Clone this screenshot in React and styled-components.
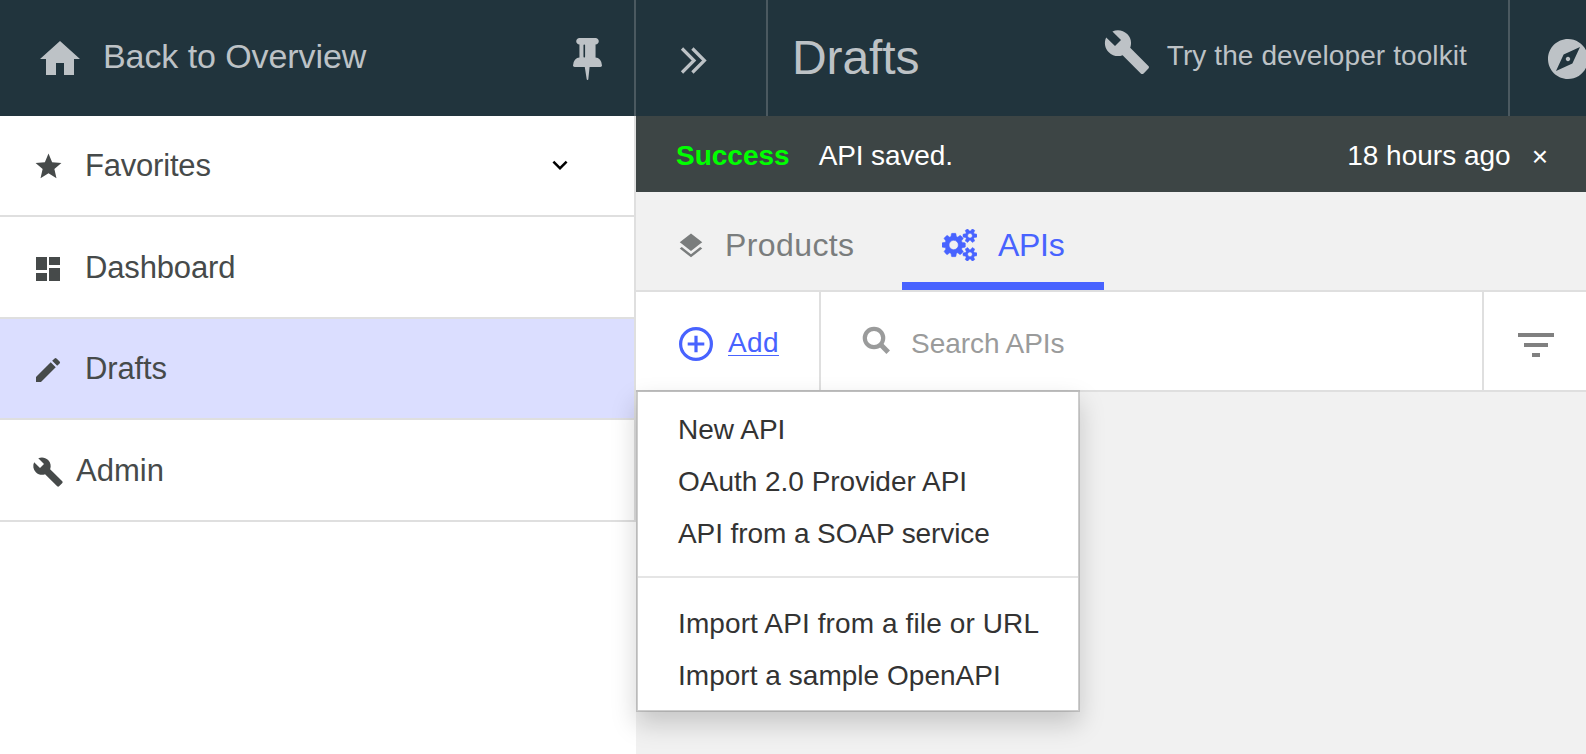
import React from "react";
import styled, { createGlobalStyle } from "styled-components";
import {
  MdStar,
  MdEdit,
  MdExpandMore,
  MdLayers,
  MdFilterList,
} from "react-icons/md";

const c = {
  header: "#21343d",
  headerText: "#bdc2c6",
  headerLine: "#4b5960",
  line: "#dfdfdf",
  page: "#f1f1f1",
  ink: "#464a4a",
  blue: "#4863ff",
  notice: "#3d4545",
};

const GlobalStyle = createGlobalStyle`
  * { box-sizing: border-box; }
  body {
    margin: 0;
    overflow: hidden;
    background: #fff;
    font-family: "Liberation Sans", Arial, sans-serif;
  }
  svg { display: block; flex: none; }
`;

const Page = styled.div`
  display: grid;
  grid-template-columns: 636px 950px;
  width: 1586px;
  height: 754px;
  overflow: hidden;
`;

const Text = styled.span`
  white-space: nowrap;
  font-size: ${(p) => p.$size}px;
  line-height: ${(p) => p.$size + 8}px;
  letter-spacing: ${(p) => p.$track || 0}px;
  padding-top: ${(p) => p.$down || 0}px;
  padding-bottom: ${(p) => p.$up || 0}px;
`;

const Sidebar = styled.aside`
  display: flex;
  flex-direction: column;
  background: #fff;
`;

const SideHeader = styled.div`
  display: flex;
  align-items: center;
  height: 116px;
  padding: 2px 32px 0 36px;
  background: ${c.header};
  color: ${c.headerText};
  border-right: 2px solid ${c.headerLine};
`;

const BackLink = styled.a`
  display: flex;
  align-items: center;
  gap: 19px;
  margin-right: auto;
  color: inherit;
`;

const NavList = styled.nav`
  border-right: 2px solid ${c.line};
`;

const NavItem = styled.a`
  display: flex;
  align-items: center;
  gap: ${(p) => p.$gap || 21}px;
  height: ${(p) => p.$height}px;
  padding: 0 59px 0 32px;
  color: ${c.ink};
  background: ${(p) => (p.$active ? "#dbdeff" : "#fff")};
  border-bottom: 2px solid ${c.line};
`;

const NavIcon = styled.span`
  display: flex;
  justify-content: center;
  width: 32px;
  padding-top: ${(p) => p.$down || 0}px;
`;

const Toggle = styled.span`
  display: flex;
  margin-left: auto;
  padding-bottom: 2px;
  color: #000;
`;

const Main = styled.main`
  display: flex;
  flex-direction: column;
  background: ${c.page};
`;

const TopBar = styled.header`
  display: flex;
  height: 116px;
  background: ${c.header};
  color: ${c.headerText};
  overflow: hidden;
`;

const TopCell = styled.div`
  display: flex;
  align-items: center;
  flex: none;
  width: ${(p) => p.$width}px;
  padding-left: ${(p) => p.$left}px;
  padding-top: ${(p) => p.$down || 0}px;
  border-right: ${(p) => (p.$last ? 0 : 2)}px solid ${c.headerLine};
`;

const Toolkit = styled.a`
  display: flex;
  align-items: center;
  gap: 16px;
  margin-left: auto;
  padding: 0 41px 4px 0;
`;

const ToolkitIcon = styled.span`
  display: flex;
  padding-bottom: 8px;
`;

const Notice = styled.div`
  display: flex;
  align-items: center;
  height: 76px;
  padding: 3px 38px 0 40px;
  background: ${c.notice};
  color: #fff;
`;

const Status = styled(Text)`
  color: #00ff00;
  font-weight: 700;
  margin-right: 29px;
`;

const Ago = styled(Text)`
  margin-left: auto;
  margin-right: 21px;
`;

const Tabs = styled.div`
  display: flex;
  height: 100px;
  border-bottom: 2px solid ${c.line};
`;

const Tab = styled.a`
  display: flex;
  align-items: center;
  width: ${(p) => p.$width}px;
  padding: ${(p) => (p.$active ? "8px 0 0 39.5px" : "0 0 0 40px")};
  gap: ${(p) => (p.$active ? 21.5 : 19)}px;
  color: ${(p) => (p.$active ? c.blue : "#7a7d7d")};
  border-bottom: ${(p) => (p.$active ? `8px solid ${c.blue}` : "0")};
`;

const TabIcon = styled.span`
  display: flex;
  padding-top: ${(p) => p.$down || 0}px;
`;

const Toolbar = styled.div`
  position: relative;
  display: flex;
  height: 100px;
  background: #fff;
  border-bottom: 2px solid ${c.line};
`;

const AddCell = styled.div`
  display: flex;
  align-items: center;
  gap: 15px;
  width: 185px;
  padding: 6px 0 0 43px;
  color: ${c.blue};
  border-right: 2px solid ${c.line};
`;

const AddText = styled.span`
  font-size: 28px;
  line-height: 31px;
  height: 29px;
  letter-spacing: 0.4px;
  margin-bottom: 5px;
  border-bottom: 1px solid ${c.blue};
`;

const SearchCell = styled.div`
  display: flex;
  align-items: center;
  flex: 1;
  gap: 19px;
  padding-left: 41px;
  color: #9a9b9b;
`;

const SearchIcon = styled.svg`
  margin-bottom: 2px;
  filter: blur(0.6px);
`;

const FilterCell = styled.div`
  display: flex;
  align-items: center;
  padding: 8px 0 0 28px;
  width: 104px;
  color: #808080;
  border-left: 2px solid ${c.line};
`;

const Menu = styled.ul`
  position: absolute;
  top: 98px;
  left: 0;
  z-index: 2;
  width: 444px;
  height: 322px;
  margin: 0;
  padding: 12px 0 0;
  list-style: none;
  background: #fff;
  background-clip: padding-box;
  border: 2px solid rgba(0, 0, 0, 0.15);
  box-shadow: 0 12px 24px rgba(0, 0, 0, 0.175);
`;

const MenuItem = styled.li`
  height: 52px;
  padding-left: 40px;
  font-size: 28px;
  line-height: 52px;
  letter-spacing: ${(p) => p.$track || 0}px;
  white-space: nowrap;
  color: #333;
`;

const Divider = styled.li`
  height: 2px;
  margin: 16px 0 20px;
  background: #e5e5e5;
`;

const HomeIcon = () => (
  <svg width="48" height="48" viewBox="0 0 24 24" fill="currentColor">
    <path d="M10 20v-6h4v6h5v-8h3L12 3 2 12h3v8z" />
  </svg>
);

const WrenchIcon = ({ size }) => (
  <svg width={size} height={size} viewBox="0 0 24 24" fill="currentColor">
    <path d="M22.7 19l-9.1-9.1c.9-2.3.4-5-1.5-6.9-2-2-5-2.4-7.4-1.3L9 6 6 9 1.6 4.7C.4 7.1.9 10.1 2.9 12.1c1.9 1.9 4.6 2.4 6.9 1.5l9.1 9.1c.4.4 1 .4 1.4 0l2.3-2.3c.5-.4.5-1.1.1-1.4z" />
  </svg>
);

const DashboardIcon = () => (
  <svg width="32" height="32" viewBox="0 0 32 32" fill="currentColor">
    <path d="M4 4h11v13H4zM17 4h11v8H17zM4 20h11v8H4zM17 15h11v13H17z" />
  </svg>
);

const PinIcon = () => (
  <svg width="29" height="42" viewBox="0 -1408 1152 1664" fill="currentColor">
    <path
      transform="scale(1 -1)"
      d="M480 672v448q0 14 -9 23t-23 9t-23 -9t-9 -23v-448q0 -14 9 -23t23 -9t23 9t9 23zM1152 320q0 -26 -19 -45t-45 -19h-429l-51 -483q-2 -12 -10.5 -20.5t-20.5 -8.5h-1q-27 0 -32 27l-76 485h-404q-26 0 -45 19t-19 45q0 123 78.5 221.5t177.5 98.5v512q-52 0 -90 38t-38 90t38 90t90 38h640q52 0 90 -38t38 -90t-38 -90t-90 -38v-512q99 0 177.5 -98.5t78.5 -221.5z"
    />
  </svg>
);

const DoubleChevron = () => (
  <svg width="28" height="30" viewBox="0 0 28 30" fill="none" stroke="currentColor" strokeWidth="3.2">
    <path d="M2 2.5 14 14.5 2 26.5M12.4 2.5l12 12-12 12" />
  </svg>
);

const CompassIcon = () => (
  <svg width="48" height="48" viewBox="0 0 24 24" fill="currentColor">
    <path d="M12 10.9c-.61 0-1.1.49-1.1 1.1s.49 1.1 1.1 1.1c.61 0 1.1-.49 1.1-1.1s-.49-1.1-1.1-1.1zM12 2C6.48 2 2 6.48 2 12s4.48 10 10 10 10-4.48 10-10S17.52 2 12 2zm2.19 12.19L6 18l3.81-8.19L18 6l-3.81 8.19z" />
  </svg>
);

const smallGear =
  "v-140q0 -16 -149 -31q-12 -27 -30 -52q51 -113 51 -138q0 -4 -4 -7q-122 -71 -124 -71q-8 0 -46 47t-52 68q-20 -2 -30 -2t-30 2q-14 -21 -52 -68t-46 -47q-2 0 -124 71q-4 3 -4 7q0 25 51 138q-18 25 -30 52q-149 15 -149 31v140q0 16 149 31q13 29 30 52q-51 113 -51 138q0 4 4 7q4 2 35 20t59 34t30 16q8 0 46 -46.5t52 -67.5q20 2 30 2t30 -2q51 71 92 112l6 2q4 0 124 -70q4 -3 4 -7q0 -25 -51 -138q17 -23 30 -52q149 -15 149 -31z";

const GearsIcon = () => (
  <svg
    width="35"
    height="32"
    viewBox="0 -1520 1920 1760"
    fill="currentColor"
    stroke="currentColor"
    strokeWidth="30"
  >
    <path
      transform="scale(1 -1)"
      d={`M896 640q0 106 -75 181t-181 75t-181 -75t-75 -181t75 -181t181 -75t181 75t75 181zM1664 128q0 52 -38 90t-90 38t-90 -38t-38 -90q0 -53 37.5 -90.5t90.5 -37.5t90.5 37.5t37.5 90.5zM1664 1152q0 52 -38 90t-90 38t-90 -38t-38 -90q0 -53 37.5 -90.5t90.5 -37.5t90.5 37.5t37.5 90.5zM1280 731v-185q0 -10 -7 -19.5t-16 -10.5l-155 -24q-11 -35 -32 -76q34 -48 90 -115q7 -11 7 -20q0 -12 -7 -19q-23 -30 -82.5 -89.5t-78.5 -59.5q-11 0 -21 7l-115 90q-37 -19 -77 -31q-11 -108 -23 -155q-7 -24 -30 -24h-186q-11 0 -20 7.5t-10 17.5l-23 153q-34 10 -75 31l-118 -89q-7 -7 -20 -7q-11 0 -21 8q-144 133 -144 160q0 9 7 19q10 14 41 53t47 61q-23 44 -35 82l-152 24q-10 1 -17 9.5t-7 19.5v185q0 10 7 19.5t16 10.5l155 24q11 35 32 76q-34 48 -90 115q-7 11 -7 20q0 12 7 20q22 30 82 89t79 59q11 0 21 -7l115 -90q34 18 77 32q11 108 23 154q7 24 30 24h186q11 0 20 -7.5t10 -17.5l23 -153q34 -10 75 -31l118 89q8 7 20 7q11 0 21 -8q144 -133 144 -160q0 -8 -7 -19q-12 -16 -42 -54t-45 -60q23 -48 34 -82l152 -23q10 -2 17 -10.5t7 -19.5zM1920 198${smallGear}M1920 1222${smallGear}`}
    />
  </svg>
);

const AddIcon = () => (
  <svg width="34" height="34" viewBox="0 0 34 34" fill="none" stroke="currentColor" strokeWidth="3.2">
    <circle cx="17" cy="17" r="15.4" />
    <path d="M17 8.7v16.6M8.7 17h16.6" />
  </svg>
);

export default function App() {
  return (
    <>
      <GlobalStyle />
      <Page>
        <Sidebar>
          <SideHeader>
            <BackLink>
              <HomeIcon />
              <Text $size={34} $up={7} $track={-0.08}>Back to Overview</Text>
            </BackLink>
            <PinIcon />
          </SideHeader>
          <NavList>
            <NavItem $height={101}>
              <NavIcon $down={2}><MdStar size={31} /></NavIcon>
              <Text $size={31} $track={-0.2}>Favorites</Text>
              <Toggle><MdExpandMore size={30} /></Toggle>
            </NavItem>
            <NavItem $height={102}>
              <NavIcon $down={4}><DashboardIcon /></NavIcon>
              <Text $size={31} $track={-0.15}>Dashboard</Text>
            </NavItem>
            <NavItem $height={101} $active>
              <NavIcon $down={3}><MdEdit size={32} /></NavIcon>
              <Text $size={31} $track={-0.15}>Drafts</Text>
            </NavItem>
            <NavItem $height={102} $gap={12}>
              <NavIcon $down={4}><WrenchIcon size={32} /></NavIcon>
              <Text $size={31}>Admin</Text>
            </NavItem>
          </NavList>
        </Sidebar>
        <Main>
          <TopBar>
            <TopCell $width={132} $left={44} $down={5}>
              <DoubleChevron />
            </TopCell>
            <TopCell $width={742} $left={24}>
              <Text $size={48} $track={-0.1}>Drafts</Text>
              <Toolkit>
                <ToolkitIcon><WrenchIcon size={48} /></ToolkitIcon>
                <Text $size={28} $track={0.1}>Try the developer toolkit</Text>
              </Toolkit>
            </TopCell>
            <TopCell $width={84} $left={34} $down={2} $last>
              <CompassIcon />
            </TopCell>
          </TopBar>
          <Notice>
            <Status $size={28}>Success</Status>
            <Text $size={28} $track={-0.12}>API saved.</Text>
            <Ago $size={28}>18 hours ago</Ago>
            <Text $size={28} $down={2}>×</Text>
          </Notice>
          <Tabs>
            <Tab $width={266}>
              <TabIcon $down={10}><MdLayers size={30} /></TabIcon>
              <Text $size={32} $down={8} $track={0.4}>Products</Text>
            </Tab>
            <Tab $width={202} $active>
              <TabIcon $down={8}><GearsIcon /></TabIcon>
              <Text $size={32} $down={8} $track={-0.3}>APIs</Text>
            </Tab>
          </Tabs>
          <Toolbar>
            <AddCell>
              <AddIcon />
              <AddText>Add</AddText>
            </AddCell>
            <SearchCell>
              <SearchIcon width="30" height="30" viewBox="0 0 30 30" fill="none" stroke="currentColor">
                <circle cx="12" cy="13" r="9.2" strokeWidth="4.2" />
                <path d="M19.6 20.6 26.2 27.2" strokeWidth="5" />
              </SearchIcon>
              <Text $size={28} $down={5} $track={-0.05}>Search APIs</Text>
            </SearchCell>
            <FilterCell>
              <MdFilterList size={48} />
            </FilterCell>
            <Menu>
              <MenuItem>New API</MenuItem>
              <MenuItem $track={-0.02}>OAuth 2.0 Provider API</MenuItem>
              <MenuItem $track={-0.09}>API from a SOAP service</MenuItem>
              <Divider />
              <MenuItem $track={0.11}>Import API from a file or URL</MenuItem>
              <MenuItem $track={0.03}>Import a sample OpenAPI</MenuItem>
            </Menu>
          </Toolbar>
        </Main>
      </Page>
    </>
  );
}
